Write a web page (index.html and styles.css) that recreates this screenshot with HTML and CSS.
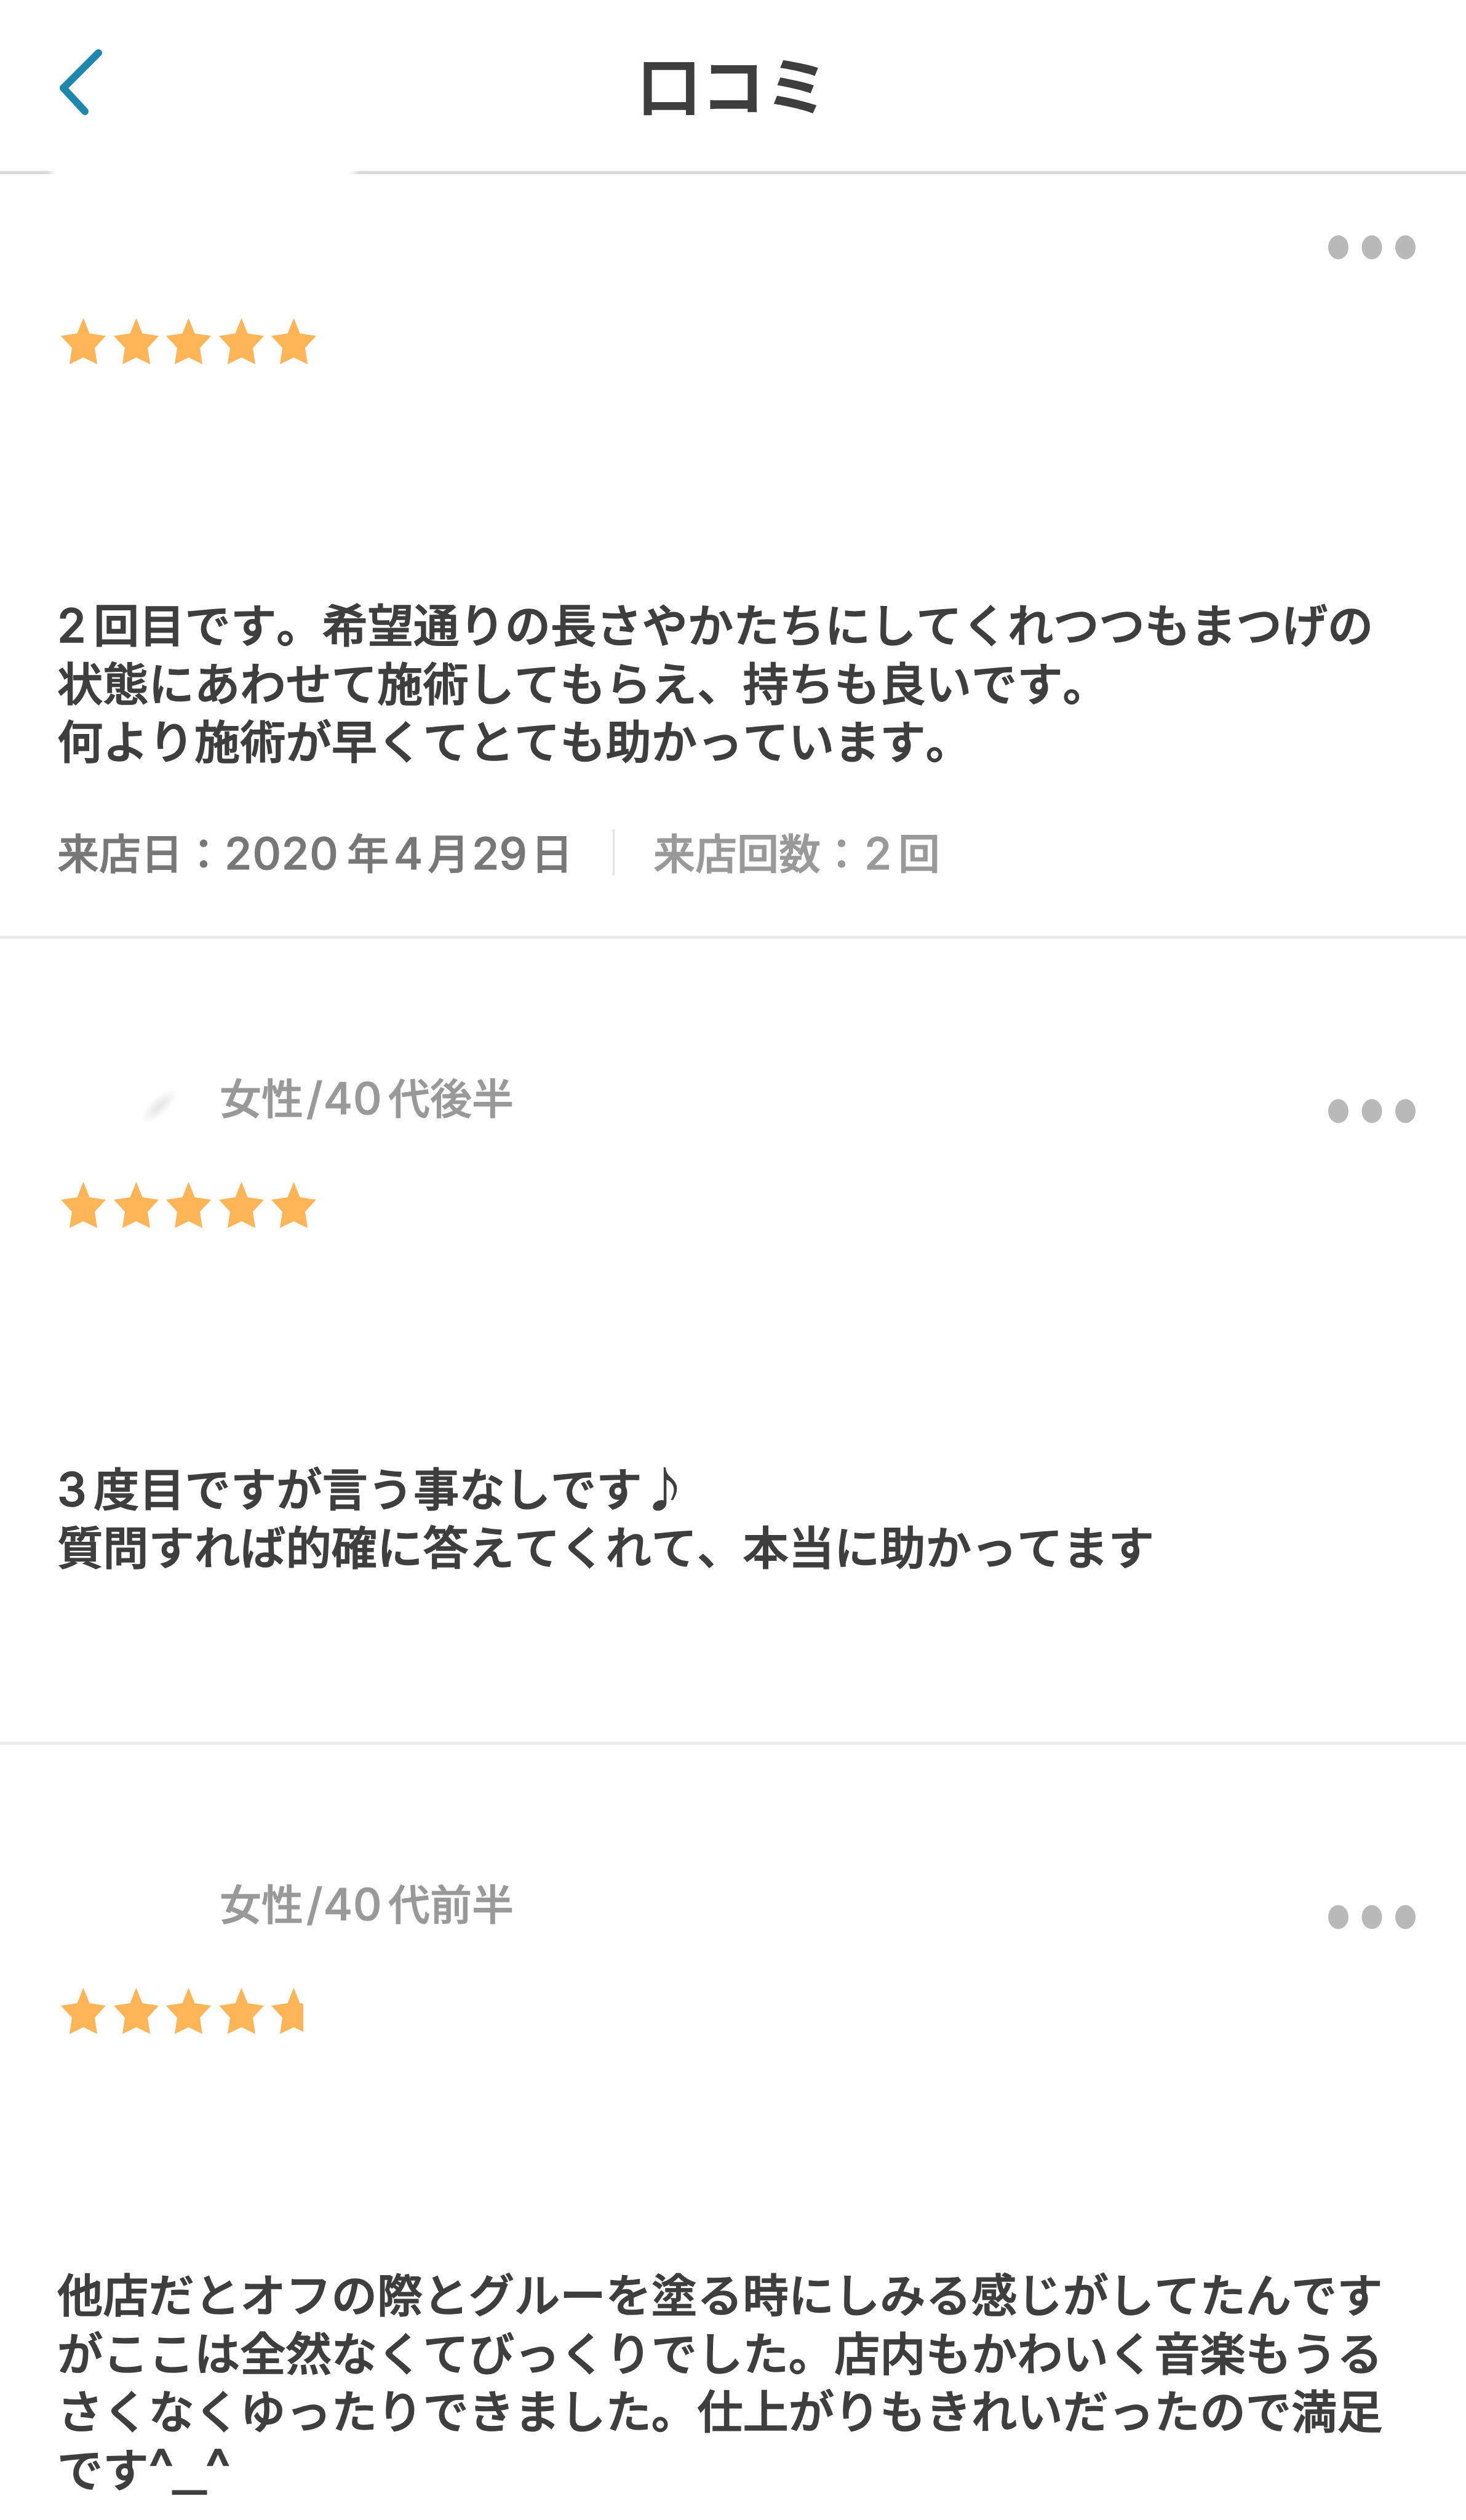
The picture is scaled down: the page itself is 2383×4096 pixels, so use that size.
FILE: index.html
```html
<!DOCTYPE html>
<html lang="ja">
<head>
  <meta charset="UTF-8">
  <title>口コミ</title>
  <link rel="stylesheet" href="styles.css">
</head>
<body>

  <!-- Símbolos reutilizables -->
  <svg class="symbols" aria-hidden="true">
    <symbol id="star" viewBox="0 0 73 75">
      <path d="M36.500 0 L46.500 25 L73 29 L55 48.500 L59 75 L36.500 64 L14 75 L18 48.500 L0 29 L26.500 25 Z"/>
    </symbol>
    <symbol id="dots" viewBox="0 0 142 40">
      <ellipse cx="16.500" cy="20" rx="16.500" ry="19.500"/>
      <ellipse cx="71" cy="20" rx="16.500" ry="19.500"/>
      <ellipse cx="125.500" cy="20" rx="16.500" ry="19.500"/>
    </symbol>
  </svg>

  <header class="header">
    <a class="back" href="#">
      <svg viewBox="0 0 70 110"><path d="M64 6 L7 63 L42 101"/></svg>
    </a>
    <h1>口コミ</h1>
  </header>
  <div class="header-line"></div>

  <section class="review first">
    <div class="review-head">
      <p class="user"></p>
      <svg class="dots"><use href="#dots"/></svg>
    </div>
    <div class="stars">
      <svg><use href="#star"/></svg>
      <svg><use href="#star"/></svg>
      <svg><use href="#star"/></svg>
      <svg><use href="#star"/></svg>
      <svg><use href="#star"/></svg>
    </div>
    <p class="comment"><span class="num lead">2</span>回目です。希望通りの長さやかたちにしてくれつつもまつげの<br>状態にあわせて施術してもらえ、持ちも良いです。<br>何より施術が早くてとても助かっています。</p>
    <div class="visit">
      <span class="date">来店日：<span class="num year">2020</span>年<span class="num month">4</span>月<span class="num day">29</span>日</span>
      <span class="count">来店回数：<span class="num times">2</span>回</span>
    </div>
  </section>

  <section class="review second">
    <div class="review-head">
      <div class="avatar"></div>
      <p class="user">女性<span class="num age">/40</span>代後半</p>
      <svg class="dots"><use href="#dots"/></svg>
    </div>
    <div class="stars">
      <svg><use href="#star"/></svg>
      <svg><use href="#star"/></svg>
      <svg><use href="#star"/></svg>
      <svg><use href="#star"/></svg>
      <svg><use href="#star"/></svg>
    </div>
    <p class="comment"><span class="num lead">3</span>度目ですが言う事なしです♪<br>質問すれば的確に答えてくれて、本当に助かってます</p>
  </section>

  <section class="review">
    <div class="review-head">
      <p class="user">女性<span class="num age">/40</span>代前半</p>
      <svg class="dots"><use href="#dots"/></svg>
    </div>
    <div class="stars">
      <svg><use href="#star"/></svg>
      <svg><use href="#star"/></svg>
      <svg><use href="#star"/></svg>
      <svg><use href="#star"/></svg>
      <svg class="partial"><use href="#star"/></svg>
    </div>
    <p class="comment">他店だとオフの際とグルーを塗る時にしみる感じがしてたんです<br>がここは全然なくてびっくりでした。店内もかわいく音楽もうる<br>さくなくゆったりできました。仕上がりもきれいだったので満足<br>です<span class="num face">^<span class="mouth">_</span>^</span></p>
  </section>

</body>
</html>
```
FILE: styles.css
```css
* {
  box-sizing: border-box;
}

body {
  margin: 0;
  height: 4096px;
  overflow: hidden;
  background-color: #fefefe;
  color: #3e3e3e;
  font-family: "Noto Sans CJK JP", sans-serif;
  font-kerning: none;
  text-spacing-trim: space-all;
}

h1, p {
  margin: 0;
}

.symbols {
  display: none;
}

.header {
  display: grid;
  grid-template-columns: 300px 1fr 300px;
  height: 278px;
}

.back {
  padding: 80px 0 0 96px;
}

.back svg {
  width: 70px;
  height: 110px;
  fill: none;
  stroke: #1f87ad;
  stroke-width: 12;
  stroke-linecap: round;
  stroke-linejoin: round;
}

h1 {
  text-align: center;
  font-size: 104px;
  font-weight: 700;
  line-height: 270px;
}

.header-line {
  height: 5px;
  background: linear-gradient(90deg, #d9d9d9 76px, transparent 90px, transparent 568px, #d9d9d9 586px);
}

.review {
  display: flex;
  flex-direction: column;
  height: 1311px;
  padding: 260px 80px 0 93px;
}

.review.first {
  height: 1243px;
  padding-top: 99px;
  border-bottom: 5px solid #ebebeb;
}

.review.second {
  height: 1310px;
  border-bottom: 5px solid #ebebeb;
}

.review-head {
  display: flex;
  height: 40px;
}

.user {
  flex: 1;
  margin-top: -44px;
  padding-left: 264px;
  color: #999;
  font-size: 68px;
  font-weight: 500;
  line-height: 80px;
  white-space: nowrap;
  -webkit-text-stroke: 1px #999;
}

.avatar {
  width: 76px;
  height: 28px;
  margin: -2px -204px 0 128px;
  background: radial-gradient(closest-side, #e4e4e4, transparent);
  transform: rotate(-42deg);
}

.dots {
  width: 142px;
  height: 40px;
  margin-right: 2px;
  fill: #b9b9b9;
}

.stars {
  display: flex;
  gap: 12.500px;
  padding: 95px 0 0 6px;
}

.stars svg {
  width: 73px;
  height: 75px;
  fill: #fdb557;
}

.stars .partial {
  clip-path: inset(0 21px 0 0);
}

.comment {
  margin-top: 373px;
  font-size: 74.300px;
  font-weight: 500;
  line-height: 94.700px;
  white-space: nowrap;
  -webkit-text-stroke: 1.500px #3e3e3e;
}

.num {
  display: inline-block;
  font-family: Inter, sans-serif;
  font-weight: 500;
  line-height: 1;
}

.lead {
  width: 59px;
  font-size: 76px;
}

.visit {
  display: flex;
  margin-top: 99px;
  font-size: 68px;
  font-weight: 500;
  line-height: 72px;
  white-space: nowrap;
}

.date {
  width: 906px;
  color: #777;
  border-right: 3px solid #e4e4e4;
  -webkit-text-stroke: 1px #777;
}

.count {
  padding-left: 63px;
  color: #999;
  -webkit-text-stroke: 1px #999;
}

.visit .num {
  font-size: 72px;
}

.year {
  width: 199px;
  letter-spacing: 1px;
}

.month {
  width: 63px;
  text-align: center;
}

.day {
  width: 100px;
  padding-left: 4px;
}

.times {
  width: 58px;
  padding-left: 3px;
}

.age {
  width: 138px;
  padding-left: 5px;
  font-size: 72px;
  letter-spacing: 1px;
}

.face {
  font-size: 86px;
}

.mouth {
  font-family: "Liberation Sans", sans-serif;
  font-size: 92px;
  font-weight: 700;
  line-height: 0;
  -webkit-text-stroke: 4px #3e3e3e;
}
```
